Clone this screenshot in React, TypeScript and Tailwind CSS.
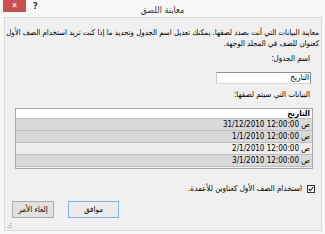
import React from "react";

const rows = [
  { t: "31/12/2010 12:00:00 ص", bg: "bg-[#d9d9d9]" },
  { t: "1/1/2010 12:00:00 ص", bg: "bg-[#d9d9d9]" },
  { t: "2/1/2010 12:00:00 ص", bg: "bg-[#eeeeee]" },
  { t: "3/1/2010 12:00:00 ص", bg: "bg-[#d9d9d9]" },
];

export default function App() {
  return (
    <div
      className="w-[325px] h-[234px] bg-[#f7f7f7] text-black overflow-hidden"
      style={{ fontFamily: '"DejaVu Sans Condensed", "DejaVu Sans", sans-serif' }}
    >
      {/* title bar */}
      <div className="grid grid-cols-[1fr_auto_1fr] h-[17px]" dir="ltr">
        <div className="flex items-start">
          <div className="ml-[3px] w-[23px] h-[12px] bg-[#c75050] flex items-center justify-center text-white text-[8px] leading-none">
            ✕
          </div>
          <div className="ml-[7px] mt-[1px] text-[9px] font-bold leading-[10px] text-[#333]">?</div>
        </div>
        <div className="text-[9px] leading-[17px] text-[#333] pt-[2px]" dir="rtl">
          معاينة اللصق
        </div>
        <div />
      </div>

      {/* panel */}
      <div
        dir="rtl"
        className="ml-[4px] mr-[3px] h-[214px] border border-[#dadada] bg-[#f0f0f0] flex flex-col text-[8px]"
      >
        <p className="pt-[9px] pr-[2px] pl-[1px] leading-[11px] text-[7.8px]">
          معاينة البيانات التي أنت بصدد لصقها. يمكنك تعديل اسم الجدول وتحديد ما إذا كنت تريد استخدام الصف الأول
          كعنوان للصف في المجلد الوجهة.
        </p>
        <div className="mt-[4px] pr-[11px] leading-[11px]">اسم الجدول:</div>
        <div className="mt-[8px] mr-[10px] w-[95px] h-[12px] border border-[#8f8f8f] border-l-[#c9c9c9] border-b-[#d9d9d9] bg-white leading-[10px] pr-[1px]">
          التاريخ
        </div>
        <div className="mt-[5px] pr-[11px] leading-[11px]">البيانات التي سيتم لصقها:</div>
        <div className="mt-[8px] ml-[10px] mr-[8px] h-[61px] border border-[#a9a9a9] bg-[#f4f4f4] flex flex-col">
          <div className="h-[10px] bg-white border-b border-[#bdbdbd] font-bold leading-[10px] pr-[2px]">
            التاريخ
          </div>
          {rows.map((r) => (
            <div
              key={r.t}
              className={`h-[12px] ${r.bg} border-b border-[#bdbdbd] leading-[11px] pr-[2px]`}
            >
              <span dir="ltr" className="[unicode-bidi:isolate]">{r.t}</span>
            </div>
          ))}
        </div>
        <div className="mt-[14px] mr-[6px] flex items-center gap-[5px] h-[11px]">
          <div className="w-[8px] h-[8px] border border-[#333] bg-white flex items-center justify-center">
            <svg width="6" height="6" viewBox="0 0 6 6">
              <path d="M0.8 3 L2.3 4.6 L5.3 1" stroke="#222" strokeWidth="1.1" fill="none" />
            </svg>
          </div>
          <span className="leading-[11px]">استخدام الصف الأول كعناوين للأعمدة.</span>
        </div>
        <div className="mt-[7px] pl-[7px] flex justify-end gap-[14px]">
          <div className="w-[51px] h-[17px] border border-[#7eb4ea] bg-[#ececec] flex items-center justify-center">
            موافق
          </div>
          <div className="w-[42px] h-[17px] border border-[#adadad] bg-[#e1e1e1] flex items-center justify-center">
            إلغاء الأمر
          </div>
        </div>
        <div className="mt-auto self-end ml-[2px] mb-[2px]" dir="ltr">
          <svg width="5" height="5" viewBox="0 0 5 5">
            <rect x="3" y="0" width="2" height="1" fill="#bcbcbc" />
            <rect x="1" y="2" width="2" height="1" fill="#bcbcbc" />
            <rect x="3" y="2" width="2" height="1" fill="#bcbcbc" />
            <rect x="0" y="4" width="5" height="1" fill="#bcbcbc" />
          </svg>
        </div>
      </div>
    </div>
  );
}
